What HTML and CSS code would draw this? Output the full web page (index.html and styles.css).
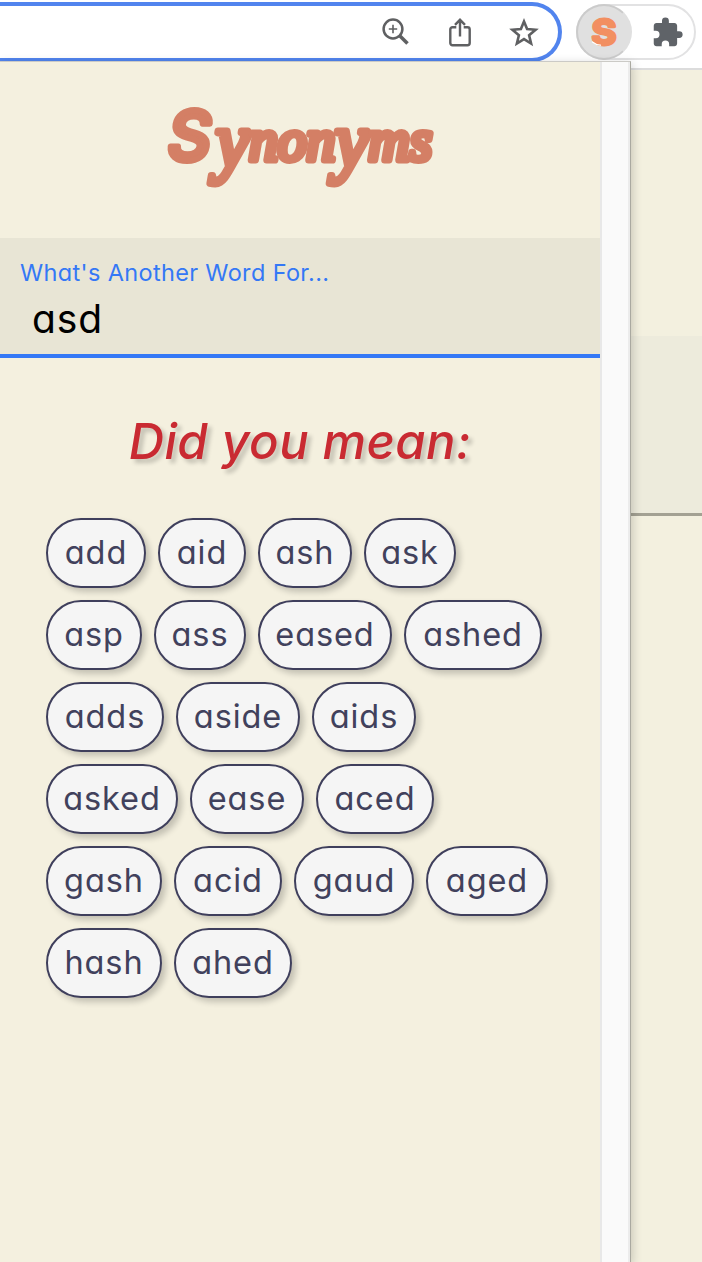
FILE: index.html
```html
<!DOCTYPE html>
<html lang="en">
<head>
<meta charset="utf-8">
<title>Synonyms</title>
<link rel="stylesheet" href="styles.css">
</head>
<body>
<header class="toolbar">
  <div class="omnibox">
    <svg class="icon" viewBox="0 0 32 32"><g fill="none" stroke="#5f6062" stroke-width="2.5"><circle cx="13" cy="13" r="9.400"/><path d="M19.500 19.500l8 8" stroke-width="3.600"/><path d="M13 8.800v8.400M8.800 13h8.400" stroke-width="1.600"/></g></svg>
    <svg class="icon" viewBox="0 0 32 32"><g fill="none" stroke="#5f6062" stroke-width="2.4"><path d="M12.300 11.300H8.500a2.200 2.200 0 0 0-2.200 2.200V27a2.200 2.200 0 0 0 2.200 2.200h15A2.200 2.200 0 0 0 25.700 27V13.500a2.200 2.200 0 0 0-2.200-2.200h-3.800"/><path d="M16 20.500V4.500M11 8.800l5-5 5 5"/></g></svg>
    <svg class="icon" viewBox="0 0 32 32"><path fill="none" stroke="#5f6062" stroke-width="2.600" d="M16 5.500l3.100 7.600 8.500.7-6.500 5.500 2 8.200-7.100-4.400-7.100 4.400 2-8.200-6.500-5.500 8.500-.7z"/></svg>
  </div>
  <div class="extensions">
    <div class="ext-active">
      <svg viewBox="0 0 52 52"><text class="ext-letter" x="13.500" y="38.500" textLength="25" lengthAdjust="spacingAndGlyphs">S</text><path d="M14.500 36q4 3.300 8 3.200" fill="none" stroke="#fff" stroke-width="1.300" stroke-linecap="round"/></svg>
    </div>
    <svg class="puzzle" viewBox="0 0 24 24"><path fill="#5f6368" d="M20.500 11H19V7c0-1.100-.9-2-2-2h-4V3.500a2.500 2.500 0 0 0-5 0V5H4c-1.100 0-2 .9-2 2v3.800h1.500a2.700 2.700 0 0 1 0 5.400H2V20c0 1.100.9 2 2 2h3.800v-1.500a2.700 2.700 0 0 1 5.400 0V22H17c1.100 0 2-.9 2-2v-4h1.500a2.500 2.500 0 0 0 0-5z"/></svg>
  </div>
</header>
<div class="stage">
  <main class="popup">
    <div class="content">
      <h1 class="logo"><svg viewBox="0 0 600 176"><text class="logo-cap" x="168" y="98" textLength="43" lengthAdjust="spacingAndGlyphs">S</text><text class="logo-rest" x="216" y="98" textLength="216" lengthAdjust="spacingAndGlyphs"><tspan class="logo-tail" dy="7">y</tspan><tspan dy="-7">non</tspan><tspan class="logo-tail" dy="7">y</tspan><tspan dy="-7">ms</tspan></text></svg></h1>
      <section class="field">
        <label class="label">What's Another Word For...</label>
        <div class="value">asd</div>
      </section>
      <h2 class="heading">Did you mean:</h2>
      <div class="chips">
        <div class="row"><span class="chip" style="width:100px">add</span><span class="chip" style="width:88px">aid</span><span class="chip" style="width:94px">ash</span><span class="chip" style="width:92px">ask</span></div>
        <div class="row"><span class="chip" style="width:96px">asp</span><span class="chip" style="width:92px">ass</span><span class="chip" style="width:134px">eased</span><span class="chip" style="width:138px">ashed</span></div>
        <div class="row"><span class="chip" style="width:118px">adds</span><span class="chip" style="width:124px">aside</span><span class="chip" style="width:104px">aids</span></div>
        <div class="row"><span class="chip" style="width:132px">asked</span><span class="chip" style="width:114px">ease</span><span class="chip" style="width:118px">aced</span></div>
        <div class="row"><span class="chip" style="width:116px">gash</span><span class="chip" style="width:108px">acid</span><span class="chip" style="width:120px">gaud</span><span class="chip" style="width:122px">aged</span></div>
        <div class="row"><span class="chip" style="width:116px">hash</span><span class="chip" style="width:118px">ahed</span></div>
      </div>
    </div>
    <div class="scrollbar"></div>
  </main>
  <aside class="page"><div class="page-field"></div></aside>
</div>
</body>
</html>
```
FILE: styles.css
```css
* { box-sizing: border-box; }
body {
  margin: 0;
  width: 702px;
  height: 1262px;
  overflow: hidden;
  display: flex;
  flex-direction: column;
  background: #fff;
  font-family: Inter, "Open Sans", sans-serif;
  font-feature-settings: "cv11";
}
.toolbar { height: 61px; display: flex; align-items: flex-start; gap: 14px; }
.omnibox {
  width: 562px;
  height: 60px;
  margin-top: 2px;
  padding-right: 18px;
  border: 4px solid #5184ee;
  border-left: 0;
  border-radius: 0 30px 30px 0;
  display: flex;
  flex: none;
  justify-content: flex-end;
  align-items: center;
  gap: 32px;
}
.icon { width: 32px; height: 32px; }
.extensions {
  width: 120px;
  height: 56px;
  margin-top: 4px;
  border: 2px solid #e2e2e3;
  border-radius: 28px;
  display: flex;
  align-items: center;
}
.ext-active {
  width: 56px;
  height: 56px;
  margin-left: -2px;
  border: 2px solid #cbcbcb;
  border-right-color: #e0e0e0;
  border-radius: 50%;
  background: #e0e0e0;
}
.ext-active svg { display: block; }
.ext-letter {
  font: 700 36px Inter, sans-serif;
  fill: #f28f61;
  stroke: #f28f61;
  stroke-width: 3px;
  stroke-linejoin: round;
}
.puzzle { width: 33px; height: 33px; margin-left: 19px; }
.stage { flex: 1; display: flex; min-height: 0; }
.popup {
  position: relative;
  z-index: 1;
  width: 631px;
  display: flex;
  border-top: 1px solid #cbcac6;
  border-right: 1px solid #aaa9a0;
  background: #f4f0df;
  box-shadow: 1px 3px 10px rgba(0, 0, 0, .2);
}
.content { width: 600px; }
.scrollbar {
  width: 30px;
  background: #fafafa;
  border-left: 2px solid #e8e8e8;
  border-right: 2px solid #ececec;
}
.logo { margin: 0; height: 176px; }
.logo svg { display: block; width: 600px; height: 176px; }
.logo text {
  fill: #d47f65;
  stroke: #d47f65;
  stroke-linejoin: round;
  font-style: italic;
}
.logo .logo-cap { font-family: Inter, sans-serif; font-weight: 500; font-size: 68px; stroke-width: 6px; }
.logo .logo-rest { font-family: "Liberation Serif", serif; font-weight: 400; font-size: 60px; stroke-width: 7px; }
.logo .logo-tail { font-size: 78px; }
.field {
  height: 120px;
  padding: 20px 20px 0;
  background: #e8e5d5;
  border-bottom: 4px solid #3478f6;
}
.label {
  display: block;
  font-size: 23.500px;
  line-height: 30px;
  letter-spacing: .35px;
  color: #3478f6;
  white-space: nowrap;
}
.value { padding-left: 12px; font-size: 39px; line-height: 61px; letter-spacing: .9px; color: #000; }
.heading {
  margin: 0;
  height: 160px;
  padding-top: 49px;
  text-align: center;
  font-size: 49px;
  line-height: 70px;
  letter-spacing: .4px;
  font-style: italic;
  font-weight: 500;
  color: #c92a32;
  text-shadow: 4px 4px 4px rgba(0, 0, 0, .2);
}
.chips { padding-left: 46px; display: flex; flex-direction: column; gap: 12px; }
.row { display: flex; gap: 12px; }
.chip {
  height: 70px;
  border: 2px solid #3f3f5c;
  border-radius: 35px;
  background: #f5f5f5;
  box-shadow: 4px 4px 6px rgba(0, 0, 0, .2);
  color: #41415c;
  font-size: 32.500px;
  line-height: 66px;
  text-align: center;
  letter-spacing: .9px;
}
.page {
  flex: 1;
  margin-top: 7px;
  padding-top: 266px;
  border-top: 2px solid #dcdcdc;
  background: #f3f0df;
}
.page-field { height: 180px; background: #edebdc; border-bottom: 3px solid #a3a193; }
```
